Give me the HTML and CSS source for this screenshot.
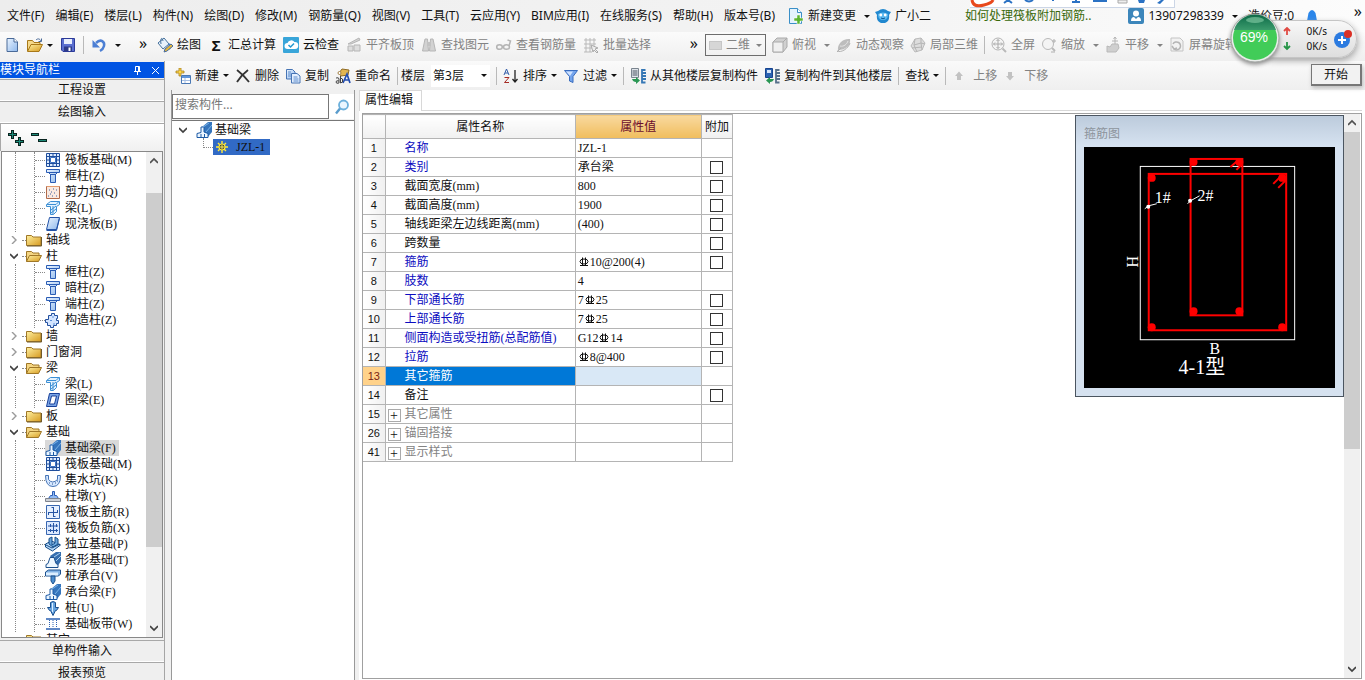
FILE: index.html
```html
<!DOCTYPE html>
<html lang="zh-CN">
<head>
<meta charset="utf-8">
<title>属性编辑</title>
<link rel="stylesheet" href="styles.css">
</head>
<body>
<svg class="defs" aria-hidden="true">
  <defs>
    <linearGradient id="gold" x1="0" y1="0" x2="1" y2="1"><stop offset="0" stop-color="#fff0a0"/><stop offset="1" stop-color="#d69a20"/></linearGradient>
    <linearGradient id="blue" x1="0" y1="0" x2="1" y2="1"><stop offset="0" stop-color="#eaf4ff"/><stop offset="1" stop-color="#8fb8ec"/></linearGradient>
    <linearGradient id="ball" x1="0" y1="0" x2="0" y2="1"><stop offset="0" stop-color="#0d6a48"/><stop offset="1" stop-color="#3b9b6c"/></linearGradient>
  </defs>
  <symbol id="new" viewBox="0 0 16 16"><path d="M3 1.500h7l3.500 3.500v9.500H3z" fill="url(#blue)" stroke="#4a6a98"/><path d="M10 1.500v3.500h3.500" fill="#fff" stroke="#4a6a98"/></symbol>
  <symbol id="open" viewBox="0 0 16 16"><path d="M.5 14V3.500h5l1.500 2h6V8" fill="#f5d98a" stroke="#a87818"/><path d="M.5 14.500 4 7.500h11.500L12 14.500z" fill="url(#gold)" stroke="#a87818"/><path d="M9 3c2-2 4-1 5 1M14.500 1.500V4.500h-3" fill="none" stroke="#4a6a98"/></symbol>
  <symbol id="save" viewBox="0 0 16 16"><path d="M1.500 1.500h13v13H3l-1.500-1.500z" fill="#5a6fd0" stroke="#2c3a98"/><path d="M4 2h8v5H4z" fill="#e8eefc"/><path d="M4 9.500h8V14H4z" fill="#2d3a88"/><path d="M8.500 10.500h2V14h-2z" fill="#fff"/></symbol>
  <symbol id="undo" viewBox="0 0 16 16"><path d="M5 6c5-5 9-1 8 3-.5 2-2 4-4 5" fill="none" stroke="#4c7fd4" stroke-width="2.500"/><path d="M1.500 3v7.500H9z" fill="#4c7fd4"/></symbol>
  <symbol id="paint" viewBox="0 0 16 16"><path d="m1 6 6-5 5 6-6 5z" fill="#e8f2fb" stroke="#44709c"/><path d="M4 7C3 2 5-1 6 4" fill="none" stroke="#44709c"/><path d="M12 7c2 2 1 4 0 5" stroke="#3e83d6" stroke-width="2" fill="none"/><path d="m7 15 1-3 6-5 2 2-6 5z" fill="#e5b73a" stroke="#4a6c9c"/></symbol>
  <symbol id="cloud" viewBox="0 0 16 16"><rect width="16" height="16" rx="1" fill="#38a5d9"/><path d="M4.500 12a3 3 0 0 1 0-6 4 4 0 0 1 7-1 3.500 3.500 0 0 1 .5 7z" fill="#fff"/><path d="m5.500 8 2 2 3.500-3.500" fill="none" stroke="#2599cf" stroke-width="1.500"/></symbol>
  <symbol id="slab" viewBox="0 0 16 16"><path d="M2 9h5v5H2zM8 8h6v6H8z" fill="#ddd" stroke="#b5b5b5"/><path d="M2 7 13 1l1 2L5 7z" fill="#d4d4d4" stroke="#b5b5b5"/></symbol>
  <symbol id="binoc" viewBox="0 0 16 16"><path d="M4 2h2.500l1 12h-6zM9.500 2H12l2.500 12h-6z" fill="#d2d2d2" stroke="#b6b6b6"/><path d="M6 5h4v4H6z" fill="#c2c2c2"/></symbol>
  <symbol id="glasses" viewBox="0 0 16 16"><g fill="none" stroke="#b4b4b4" stroke-width="1.500"><ellipse cx="3.500" cy="10" rx="2.800" ry="2.300"/><ellipse cx="10.500" cy="10" rx="3" ry="2.300"/><path d="M6.300 9.500h1.200M13 9l1.500-5-3-1"/></g></symbol>
  <symbol id="batch" viewBox="0 0 16 16"><path d="M1 3h12M1 7h12M1 11h8M3 1v14M7 1v14M11 1v8M1 15h8" stroke="#b9b9b9" fill="none"/><path d="m8 8 7 3-3 1 3 3-1 1-3-3-1 2z" fill="#eee" stroke="#aaa"/></symbol>
  <symbol id="cube" viewBox="0 0 16 16"><path d="m1 5 4-4h10v9l-4 5H1z" fill="#d0d0d0" stroke="#aaa"/><path d="M1 5h10v10H1z" fill="#f0f0f0" stroke="#aaa"/><path d="m11 5 4-4" stroke="#aaa"/></symbol>
  <symbol id="orbit" viewBox="0 0 16 16"><path d="M2 13C1 7 7 1 14 2c1 6-4 11-12 11z" fill="#bdbdbd"/><path d="M4 9c4 1 7-2 8-5" stroke="#e4e4e4" fill="none"/><path d="M1 15 5 11M1 14c4 2 11-2 13-8" fill="none" stroke="#b0b0b0"/></symbol>
  <symbol id="local" viewBox="0 0 16 16"><path d="m1 9 4-7 6-1 4 5-3 7-7 2z" fill="#ddd" stroke="#bbb"/><path d="M5 2 4 8l3 7M4 8l7-2 4 1M11 1v5l1 7M2 11l10-1" stroke="#b5b5b5" fill="none"/></symbol>
  <symbol id="full" viewBox="0 0 16 16"><circle cx="7" cy="7" r="6" fill="#f4f4f4" stroke="#b4b4b4"/><path d="M7 2.500v9M2.500 7h9M5.500 4 7 2.500 8.500 4M5.500 10 7 11.500 8.500 10M4 5.500 2.500 7 4 8.500M10 5.500 11.500 7 10 8.500" fill="none" stroke="#aaa"/><path d="m11.500 11.500 3.500 3.500" stroke="#b9b9b9" stroke-width="2"/></symbol>
  <symbol id="zoom" viewBox="0 0 16 16"><circle cx="7" cy="7" r="5.500" fill="#f4f4f4" stroke="#b9b9b9"/><path d="m11 11 3 3" stroke="#b9b9b9" stroke-width="2"/><path d="M13 2v4M11 4h4M10 15h4" stroke="#b0b0b0"/></symbol>
  <symbol id="pan" viewBox="0 0 16 16"><path d="M2 15V9l3 1 2-3h6l1 4-3 4z" fill="#cfcfcf" stroke="#b9b9b9"/><path d="M10 0v7M7 4h6M8.500 2 10 0l1.500 2" stroke="#b4b4b4" fill="none"/></symbol>
  <symbol id="rotate" viewBox="0 0 16 16"><path d="M2 1h9l3 3v10H2z" fill="#f2f2f2" stroke="#c4c4c4"/><path d="M4 7a4 4 0 1 1 1 5M3 9l2 3 3-1" fill="none" stroke="#b4b4b4" stroke-width="1.500"/></symbol>
  <symbol id="add" viewBox="0 0 16 16"><path d="M4 0h2v3h3v2H6v3H4V5H1V3h3z" fill="#ffd84a" stroke="#a8801c" stroke-width=".8"/><path d="M6.500 7.500h9v8h-9z" fill="#fff" stroke="#4a78b4"/><path d="M7 8h8v2H7z" fill="#5f96dc"/><path d="M7 12.500h8M10 10v5" stroke="#a7c0e4"/></symbol>
  <symbol id="del" viewBox="0 0 16 16"><path d="M2 2c4 3 8 7 12 12M13 2C9 5 5 9 2 14" fill="none" stroke="#333" stroke-width="1.800"/></symbol>
  <symbol id="copy" viewBox="0 0 16 16"><path d="M1.500 1.500h6L10 4v7H1.500z" fill="url(#blue)" stroke="#4674b4"/><path d="M6.500 5.500h5.500l3 2.500v7H6.500z" fill="#e3efff" stroke="#4674b4"/><path d="M8.500 9h4M8.500 11h5M8.500 13h5M3 4h3M3 6h3M3 8h3" stroke="#5d8ccc"/></symbol>
  <symbol id="rename" viewBox="0 0 16 16"><path d="m4 5 3-4 7 1-1 5-7 1z" fill="#e2b550" stroke="#8f6b24"/><circle cx="4.500" cy="5" r="1.500" fill="#fff" stroke="#a58349"/><path d="M8 15 12 6l3 9M9 12h5" stroke="#234db0" stroke-width="1.700" fill="none"/><path d="M1 10q3-1 3 1v4q-3 1-3-1t3-1M5.500 8v7q3 0 2-4l-2-1" fill="none" stroke="#444"/></symbol>
  <symbol id="sort" viewBox="0 0 16 16"><path d="m1 7 2.500-6L6 7M2 5h3" stroke="#335ca8" fill="none"/><path d="M1.500 9.500H6l-4.500 5H6" stroke="#a52b24" fill="none"/><path d="M12 2v12M9.500 11l2.500 3 2.500-3" stroke="#222" stroke-width="1.300" fill="none"/></symbol>
  <symbol id="filter" viewBox="0 0 16 16"><path d="M1.500 2.500h13L10 8.500v6L6.500 13V8.500z" fill="#75a5ed" stroke="#396cbe"/><path d="M3 3.500h7L7 8z" fill="#cfe2ff"/></symbol>
  <symbol id="from" viewBox="0 0 16 16"><path d="M1.500.500h7v9h-7z" fill="#dfe4ea" stroke="#7a848e"/><path d="M2.500 3h5M2.500 5h5M2.500 7h5" stroke="#4a5560"/><path d="M15.500 2H12v12.500h3.500M12 5h4M12 8h4M12 11h4" fill="none" stroke="#3577b5" stroke-width="1.800"/><path d="M2 11h4V9l4 3.500L6 16v-2q-3 0-4-3z" fill="#299653"/></symbol>
  <symbol id="to" viewBox="0 0 16 16"><path d="M1.500.500h7v9h-7z" fill="#2b62b1" stroke="#17438f"/><path d="M3 2h4v3H3z" fill="#d8e6fa"/><path d="M15.500 2H12v12.500h3.500M12 5h4M12 8h4M12 11h4" fill="none" stroke="#58708b" stroke-width="1.800"/><path d="M10 11H6V9l-4 3.500L6 16v-2q3 0 4-3z" fill="#299653"/></symbol>
  <symbol id="up" viewBox="0 0 10 10"><path d="m5 .500 4 4.500H7v4H3V5H1z" fill="#c2c2c2"/></symbol>
  <symbol id="down" viewBox="0 0 10 10"><path d="m5 9.500 4-4.500H7V1H3v4H1z" fill="#c2c2c2"/></symbol>
  <symbol id="change" viewBox="0 0 16 16"><path d="M1.500.500h8l4 4v11h-12z" fill="#e4f3fd" stroke="#3a8fc7"/><path d="M9.500.500v4h4" fill="#fff" stroke="#3a8fc7"/><path d="M9 7h3v3h3v3h-3v3H9v-3H6v-3h3z" fill="#5cb531" stroke="#fff" stroke-width=".5"/></symbol>
  <symbol id="robot" viewBox="0 0 16 16"><path d="M3 3q5-4 10 0l3 1-2 3q1 6-4 8H6q-5-2-4-8L0 4z" fill="#2188cf"/><path d="M3 6q5-3 10 0 0 6-5 6T3 6z" fill="#5cb9f0"/><circle cx="5.800" cy="7" r="1.400" fill="#fff"/><circle cx="10.200" cy="7" r="1.400" fill="#fff"/><path d="M6 10q2 1.500 4 0" stroke="#0b5794" fill="none"/></symbol>
  <symbol id="user" viewBox="0 0 16 16"><rect width="16" height="16" rx="2" fill="#3c86bb"/><circle cx="8" cy="5.500" r="3" fill="#fff"/><path d="M3 13q0-4 3-4l2 2 2-2q3 0 3 4z" fill="#fff"/></symbol>
  <symbol id="bell" viewBox="0 0 16 16"><path d="M3 13 4.500 5q3.500-6 7 0L13 13q3 1 2 3H1q-1-2 2-3z" fill="#2a86ea"/></symbol>
  <symbol id="search" viewBox="0 0 16 16"><circle cx="9.500" cy="6" r="4.500" fill="#eaf6ff" stroke="#6cb0dc" stroke-width="1.800"/><path d="m6 9.500-4 5" stroke="#5a9ccc" stroke-width="2.400"/></symbol>
  <symbol id="folder" viewBox="0 0 16 14"><path d="M.5 12.500v-10h5l1.500 1.500h8v8.500z" fill="url(#gold)" stroke="#9f7727"/><path d="M1 13h14.500V4" stroke="#705a2b" fill="none"/></symbol>
  <symbol id="folder-open" viewBox="0 0 16 14"><path d="M.5 12.500v-10h5l1.500 1.500h6v2.500" fill="#f4d582" stroke="#9f7727"/><path d="m.5 12.500 3-6h12l-3 6z" fill="url(#gold)" stroke="#9f7727"/></symbol>
  <symbol id="chev-r" viewBox="0 0 8 8"><path d="m2 0 4 4-4 4" stroke="#9a9a9a" stroke-width="1.400" fill="none"/></symbol>
  <symbol id="chev-d" viewBox="0 0 8 8"><path d="m0 2 4 4 4-4" stroke="#404040" stroke-width="1.700" fill="none"/></symbol>
  <symbol id="chev-u" viewBox="0 0 8 8"><path d="m0 6 4-4 4 4" stroke="#505050" stroke-width="1.700" fill="none"/></symbol>
  <symbol id="raft" viewBox="0 0 16 16"><path d="M1.500 1.500h13v13h-13z" fill="#dcebff" stroke="#1f4e9c"/><path d="M4.500 1v14M11.500 1v14M1 4.500h14M1 11.500h14M1 8h3M12 8h3M8 1v3M8 12v3" stroke="#1f4e9c"/><path d="M5.500 5.500h5v5h-5z" fill="#fff" stroke="#3a70c0"/></symbol>
  <symbol id="column" viewBox="0 0 16 16"><path d="M1.500 1.500h13v3h-2l-2 2v8h-5v-8l-2-2h-2z" fill="url(#blue)" stroke="#2a5cb4"/><path d="M2 4.500h12M5 6.500h6" stroke="#2a5cb4"/></symbol>
  <symbol id="wall" viewBox="0 0 16 16"><path d="M1.500 2.500h13v12h-13z" fill="#fae9df" stroke="#b06a4a"/><path d="M3 12h1M5 10h1M7 12h1M9 9h1M11 12h1M4 6h1M8 5h1M11 6h1M6 8h1" stroke="#3f61a0"/><path d="M2 2.500h12" stroke="#e39a6c"/></symbol>
  <symbol id="beam" viewBox="0 0 16 16"><path d="m1.500 4.500 4-3h9v3l-3 2v5l-3 3h-3v-8h-4z" fill="#e4f3ff" stroke="#3c8fd4"/><path d="M2 4.500h9l3-3M8 6v8M6 10l5-4M6 13l5-4" stroke="#3c8fd4" fill="none"/></symbol>
  <symbol id="plate" viewBox="0 0 16 16"><path d="m4.500 1.500h10l-3 12h-10z" fill="url(#blue)" stroke="#2454a8"/><path d="m1.500 14.500h10l3-12" fill="none" stroke="#2454a8"/></symbol>
  <symbol id="ring" viewBox="0 0 16 16"><path d="m4.500 1.500h10l-3 13h-10z" fill="#7aa5e6" stroke="#173f98"/><path d="m6.500 4h5l-2 8h-5z" fill="#fff" stroke="#173f98"/></symbol>
  <symbol id="gear-col" viewBox="0 0 16 16"><path d="M3.500 3.500h3v-2h3v2h3v3h-1v2h2v3h-2v2h-3v2h-3v-2h-3v-3h-2v-3h3z" fill="#d4e5ff" stroke="#24509f"/><path d="M8 4v2M5 8.500h2M9 11v2" stroke="#5e91db"/></symbol>
  <symbol id="fbeam" viewBox="0 0 16 16"><path d="m6 5 6-5h4v10l-5 6H6z" fill="#3575bd"/><path d="M1 15.500v-4l4-1V5h3v5l4 1.500v4z" fill="#eaf5ff" stroke="#1d5aa5"/><path d="m7 5 6-4M10 10l6-7" stroke="#79b2e6"/><path d="M5 12v4M8.500 12v4" stroke="#1d5aa5"/></symbol>
  <symbol id="pit" viewBox="0 0 16 16"><path d="M.5 3.500h3v4q4 5 9 0v-4h3q0 11-7.500 11T.500 3.500z" fill="#d7e8ff" stroke="#4272b5"/><path d="M4 11h1M7 12h1M10 11h1M12 9h1" stroke="#285797"/></symbol>
  <symbol id="pier" viewBox="0 0 16 16"><path d="M5.500 7.500h2v-4h2v4h2l2 3h-10z" fill="#8fb9f3" stroke="#2a5cb4"/><path d="M.5 10.500h15v3H.500z" fill="#cdd1d8" stroke="#7e848e"/></symbol>
  <symbol id="mainbar" viewBox="0 0 16 16"><path d="M1.500 1.500h13v13h-13z" fill="#e6f0ff" stroke="#3967b0"/><path d="M8.500 3v10M3 8.500h10M6.500 3.500h2M8.500 12.500h2M3.500 8v3M12.500 6v3" stroke="#2755a4"/></symbol>
  <symbol id="negbar" viewBox="0 0 16 16"><path d="M1.500 1.500h13v13h-13z" fill="#dbe9ff" stroke="#3967b0"/><path d="M8.500 3v10M3 6h10M3 10.500h10M5.500 4v3M11.500 4v3M5.500 9v3M11.500 9v3" stroke="#2755a4"/></symbol>
  <symbol id="iso" viewBox="0 0 16 16"><path d="m.500 8 6-3 9 4-8 6-7-4z" fill="#b9daf9" stroke="#164d88"/><path d="M4 2.500 7 1v8l3-2V1l3 2v5l-5 3-4-3z" fill="#6ca8dd" stroke="#164d88"/><path d="M1 9l6 3 8-4" stroke="#164d88" fill="none"/></symbol>
  <symbol id="strip" viewBox="0 0 16 16"><path d="M5 4 11 0h5v9l-4 6z" fill="#356eae"/><path d="M1 15.500v-3l2-1 2-6h4l2 6 2 1v3z" fill="#eff8ff" stroke="#1c508d"/><path d="m9 5 6-4M11 9l5-5" stroke="#a9cff0"/></symbol>
  <symbol id="cap" viewBox="0 0 16 16"><path d="m.500 4 3-2h12v4l-2 2h-13z" fill="#83b3e5" stroke="#1c508d"/><path d="M1 4.500h12v3H1z" fill="#dceeff"/><path d="M6 8h4v5l-2 3-2-3z" fill="#4b8dce" stroke="#1c508d"/></symbol>
  <symbol id="pile" viewBox="0 0 16 16"><path d="M5.500 2.500q2.500-2 5 0v5h3l-2 3h-1L8 15.500 5.500 10.500h-1l-2-3h3z" fill="#67a4df" stroke="#184d8c"/><path d="M7.500 3v9" stroke="#dceeff"/></symbol>
  <symbol id="band" viewBox="0 0 16 16"><path d="M1 3h14M1 13h14" stroke="#2c62b2" stroke-width="1.600"/><path d="M4.500 4v8M11.500 4v8M8 4v8" stroke="#2c62b2" stroke-dasharray="1 1"/></symbol>
  <symbol id="sun" viewBox="0 0 12 12"><path d="M6 0v12M0 6h12M2 2l8 8M10 2l-8 8" stroke="#ffe93a" stroke-width="1.400"/><circle cx="6" cy="6" r="3" fill="#3b3b20" stroke="#ffe93a" stroke-width="1.200"/><path d="M6 4v4M4 6h4" stroke="#fff26a"/></symbol>
  <symbol id="rebar" viewBox="0 0 12 12"><ellipse cx="6" cy="5.500" rx="4" ry="2.500" fill="none" stroke="#111"/><path d="M4.500 1.500v8M7.500 1.500v8M2 9.500h8" stroke="#111"/></symbol>
</svg>

<header class="menubar">
  <nav class="menus">
    <button>文件(F)</button><button>编辑(E)</button><button>楼层(L)</button><button>构件(N)</button><button>绘图(D)</button><button>修改(M)</button><button>钢筋量(Q)</button><button>视图(V)</button><button>工具(T)</button><button>云应用(Y)</button><button>BIM应用(I)</button><button>在线服务(S)</button><button>帮助(H)</button><button>版本号(B)</button>
    <div class="extras">
      <button class="tool"><svg class="icon"><use href="#change"/></svg>新建变更<i class="caret wide"></i></button>
      <button class="tool"><svg class="icon"><use href="#robot"/></svg>广小二</button>
    </div>
  </nav>
  <a class="tip" href="#">如何处理筏板附加钢筋..</a>
  <div class="account">
    <button class="tool"><svg class="icon"><use href="#user"/></svg>13907298339<i class="caret wide"></i></button>
    <span>造价豆:0</span>
    <button class="tool" aria-label="消息"><svg class="icon"><use href="#bell"/></svg></button>
  </div>
  <span class="more">»</span>
</header>

<div class="toolbar main-tools">
  <div class="group files">
    <button class="tool" aria-label="新建文件"><svg class="icon"><use href="#new"/></svg></button>
    <button class="tool" aria-label="打开"><svg class="icon"><use href="#open"/></svg><i class="caret"></i></button>
    <button class="tool" aria-label="保存"><svg class="icon"><use href="#save"/></svg></button>
    <i class="sep"></i>
    <button class="tool" aria-label="撤销"><svg class="icon"><use href="#undo"/></svg><i class="caret wide"></i></button>
    <span class="more">»</span>
  </div>
  <div class="group draw">
    <button class="tool"><svg class="icon"><use href="#paint"/></svg>绘图</button>
    <button class="tool"><b class="sigma">Σ</b>汇总计算</button>
    <button class="tool"><svg class="icon"><use href="#cloud"/></svg>云检查</button>
    <button class="tool off"><svg class="icon"><use href="#slab"/></svg>平齐板顶</button>
    <button class="tool off"><svg class="icon"><use href="#binoc"/></svg>查找图元</button>
    <button class="tool off"><svg class="icon"><use href="#glasses"/></svg>查看钢筋量</button>
    <button class="tool off"><svg class="icon"><use href="#batch"/></svg>批量选择</button>
    <span class="more">»</span>
  </div>
  <div class="group view">
    <label class="dimension"><i class="swatch"></i><select aria-label="视图维度"><option>二维</option></select><i class="caret"></i></label>
    <button class="tool off"><svg class="icon"><use href="#cube"/></svg>俯视<i class="caret wide"></i></button>
    <button class="tool off"><svg class="icon"><use href="#orbit"/></svg>动态观察</button>
    <button class="tool off"><svg class="icon"><use href="#local"/></svg>局部三维</button>
    <i class="sep"></i>
    <button class="tool off"><svg class="icon"><use href="#full"/></svg>全屏</button>
    <button class="tool off"><svg class="icon"><use href="#zoom"/></svg>缩放<i class="caret wide"></i></button>
    <button class="tool off"><svg class="icon"><use href="#pan"/></svg>平移<i class="caret wide"></i></button>
    <button class="tool off"><svg class="icon"><use href="#rotate"/></svg>屏幕旋转</button>
  </div>
</div>

<div class="workspace">
  <aside class="navigator">
    <h2>模块导航栏<span class="panel-actions"><button aria-label="固定"><svg viewBox="0 0 9 9"><path d="M2.500 5V.500h4V5M5.500 1v4M1 5.500h7M4.500 6v3" fill="none" stroke="#fff"/></svg></button><button aria-label="关闭"><svg viewBox="0 0 9 9"><path d="m1 1 7 7M8 1 1 8" stroke="#fff"/></svg></button></span></h2>
    <button class="section">工程设置</button>
    <button class="section">绘图输入</button>
    <div class="tree-tools">
      <button aria-label="全部展开"><svg width="16" height="16" viewBox="0 0 16 16"><path d="M4.500 0v9M0 4.500h9M11.500 7v9M7 11.500h9" stroke="#0a2420" stroke-width="3"/><path d="M4.500 1v7M1 4.500h7M11.500 8v7M8 11.500h7" stroke="#1b8a78"/></svg></button>
      <button aria-label="全部折叠"><svg width="16" height="16" viewBox="0 0 16 16"><path d="M0 4.500h8M7 10.500h9" stroke="#0a2420" stroke-width="3"/><path d="M1 4.500h6M8 10.500h7" stroke="#1b8a78"/></svg></button>
    </div>
    <div class="tree-frame">
      <div class="tree">
        <ul class="leaves">
          <li><svg class="icon"><use href="#raft"/></svg><span>筏板基础(M)</span></li>
          <li><svg class="icon"><use href="#column"/></svg><span>框柱(Z)</span></li>
          <li><svg class="icon"><use href="#wall"/></svg><span>剪力墙(Q)</span></li>
          <li><svg class="icon"><use href="#beam"/></svg><span>梁(L)</span></li>
          <li><svg class="icon"><use href="#plate"/></svg><span>现浇板(B)</span></li>
        </ul>
        <div class="branch"><svg class="chev"><use href="#chev-r"/></svg><i class="stub"></i><svg class="icon"><use href="#folder"/></svg>轴线</div>
        <div class="branch"><svg class="chev"><use href="#chev-d"/></svg><i class="stub"></i><svg class="icon"><use href="#folder-open"/></svg>柱</div>
        <ul class="leaves">
          <li><svg class="icon"><use href="#column"/></svg><span>框柱(Z)</span></li>
          <li><svg class="icon"><use href="#column"/></svg><span>暗柱(Z)</span></li>
          <li><svg class="icon"><use href="#column"/></svg><span>端柱(Z)</span></li>
          <li><svg class="icon"><use href="#gear-col"/></svg><span>构造柱(Z)</span></li>
        </ul>
        <div class="branch"><svg class="chev"><use href="#chev-r"/></svg><i class="stub"></i><svg class="icon"><use href="#folder"/></svg>墙</div>
        <div class="branch"><svg class="chev"><use href="#chev-r"/></svg><i class="stub"></i><svg class="icon"><use href="#folder"/></svg>门窗洞</div>
        <div class="branch"><svg class="chev"><use href="#chev-d"/></svg><i class="stub"></i><svg class="icon"><use href="#folder-open"/></svg>梁</div>
        <ul class="leaves">
          <li><svg class="icon"><use href="#beam"/></svg><span>梁(L)</span></li>
          <li><svg class="icon"><use href="#ring"/></svg><span>圈梁(E)</span></li>
        </ul>
        <div class="branch"><svg class="chev"><use href="#chev-r"/></svg><i class="stub"></i><svg class="icon"><use href="#folder"/></svg>板</div>
        <div class="branch"><svg class="chev"><use href="#chev-d"/></svg><i class="stub"></i><svg class="icon"><use href="#folder-open"/></svg>基础</div>
        <ul class="leaves">
          <li class="current"><svg class="icon"><use href="#fbeam"/></svg><span>基础梁(F)</span></li>
          <li><svg class="icon"><use href="#raft"/></svg><span>筏板基础(M)</span></li>
          <li><svg class="icon"><use href="#pit"/></svg><span>集水坑(K)</span></li>
          <li><svg class="icon"><use href="#pier"/></svg><span>柱墩(Y)</span></li>
          <li><svg class="icon"><use href="#mainbar"/></svg><span>筏板主筋(R)</span></li>
          <li><svg class="icon"><use href="#negbar"/></svg><span>筏板负筋(X)</span></li>
          <li><svg class="icon"><use href="#iso"/></svg><span>独立基础(P)</span></li>
          <li><svg class="icon"><use href="#strip"/></svg><span>条形基础(T)</span></li>
          <li><svg class="icon"><use href="#cap"/></svg><span>桩承台(V)</span></li>
          <li><svg class="icon"><use href="#fbeam"/></svg><span>承台梁(F)</span></li>
          <li><svg class="icon"><use href="#pile"/></svg><span>桩(U)</span></li>
          <li><svg class="icon"><use href="#band"/></svg><span>基础板带(W)</span></li>
        </ul>
        <div class="branch"><svg class="chev"></svg><i class="stub"></i><svg class="icon"><use href="#folder"/></svg>其它</div>
      </div>
      <div class="scroll nav-scroll"><svg><use href="#chev-u"/></svg><div class="track"><i></i></div><svg><use href="#chev-d"/></svg></div>
    </div>
    <button class="section">单构件输入</button>
    <button class="section">报表预览</button>
  </aside>

  <main class="content">
    <div class="toolbar component-tools">
      <button class="tool"><svg class="icon"><use href="#add"/></svg>新建<i class="caret"></i></button>
      <button class="tool"><svg class="icon"><use href="#del"/></svg>删除</button>
      <button class="tool"><svg class="icon"><use href="#copy"/></svg>复制</button>
      <button class="tool"><svg class="icon"><use href="#rename"/></svg>重命名</button>
      <i class="sep"></i>
      <label class="floor">楼层<span><select><option>第3层</option></select><i class="caret"></i></span></label>
      <i class="sep"></i>
      <button class="tool"><svg class="icon"><use href="#sort"/></svg>排序<i class="caret"></i></button>
      <button class="tool"><svg class="icon"><use href="#filter"/></svg>过滤<i class="caret"></i></button>
      <i class="sep"></i>
      <button class="tool"><svg class="icon"><use href="#from"/></svg>从其他楼层复制构件</button>
      <button class="tool"><svg class="icon"><use href="#to"/></svg>复制构件到其他楼层</button>
      <i class="sep"></i>
      <button class="tool">查找<i class="caret"></i></button>
      <i class="sep"></i>
      <button class="tool off move"><svg class="arrow"><use href="#up"/></svg>上移</button>
      <button class="tool off move"><svg class="arrow"><use href="#down"/></svg>下移</button>
    </div>

    <div class="panes">
      <section class="components">
        <div class="search"><input type="text" placeholder="搜索构件..." aria-label="搜索构件"><button aria-label="搜索"><svg class="icon"><use href="#search"/></svg></button></div>
        <ul class="component-tree">
          <li class="root"><svg class="chev"><use href="#chev-d"/></svg><svg class="icon"><use href="#fbeam"/></svg>基础梁
            <ul><li><span><svg class="sun"><use href="#sun"/></svg>JZL-1</span></li></ul>
          </li>
        </ul>
      </section>

      <section class="editor">
        <div class="tabs"><button>属性编辑</button></div>
        <div class="sheet">
          <div class="sheet-body">
            <table>
              <colgroup><col class="c-num"><col class="c-name"><col class="c-value"><col class="c-extra"></colgroup>
              <thead><tr><th></th><th>属性名称</th><th class="hot">属性值</th><th>附加</th></tr></thead>
              <tbody>
                <tr><th>1</th><td class="key">名称</td><td>JZL-1</td><td></td></tr>
                <tr><th>2</th><td class="key">类别</td><td>承台梁</td><td><input type="checkbox" aria-label="类别附加"></td></tr>
                <tr><th>3</th><td>截面宽度(mm)</td><td>800</td><td><input type="checkbox" aria-label="截面宽度附加"></td></tr>
                <tr><th>4</th><td>截面高度(mm)</td><td>1900</td><td><input type="checkbox" aria-label="截面高度附加"></td></tr>
                <tr><th>5</th><td>轴线距梁左边线距离(mm)</td><td>(400)</td><td><input type="checkbox" aria-label="轴线距离附加"></td></tr>
                <tr><th>6</th><td>跨数量</td><td></td><td><input type="checkbox" aria-label="跨数量附加"></td></tr>
                <tr><th>7</th><td class="key">箍筋</td><td><svg class="rebar"><use href="#rebar"/></svg>10@200(4)</td><td><input type="checkbox" aria-label="箍筋附加"></td></tr>
                <tr><th>8</th><td class="key">肢数</td><td>4</td><td></td></tr>
                <tr><th>9</th><td class="key">下部通长筋</td><td>7<svg class="rebar"><use href="#rebar"/></svg>25</td><td><input type="checkbox" aria-label="下部通长筋附加"></td></tr>
                <tr><th>10</th><td class="key">上部通长筋</td><td>7<svg class="rebar"><use href="#rebar"/></svg>25</td><td><input type="checkbox" aria-label="上部通长筋附加"></td></tr>
                <tr><th>11</th><td class="key">侧面构造或受扭筋(总配筋值)</td><td>G12<svg class="rebar"><use href="#rebar"/></svg>14</td><td><input type="checkbox" aria-label="侧面筋附加"></td></tr>
                <tr><th>12</th><td class="key">拉筋</td><td><svg class="rebar"><use href="#rebar"/></svg>8@400</td><td><input type="checkbox" aria-label="拉筋附加"></td></tr>
                <tr class="active"><th>13</th><td>其它箍筋</td><td></td><td></td></tr>
                <tr><th>14</th><td>备注</td><td></td><td><input type="checkbox" aria-label="备注附加"></td></tr>
                <tr class="fold"><th>15</th><td><button aria-label="展开其它属性">+</button>其它属性</td><td></td><td></td></tr>
                <tr class="fold"><th>26</th><td><button aria-label="展开锚固搭接">+</button>锚固搭接</td><td></td><td></td></tr>
                <tr class="fold"><th>41</th><td><button aria-label="展开显示样式">+</button>显示样式</td><td></td><td></td></tr>
              </tbody>
            </table>
            <figure class="stirrup">
              <figcaption>箍筋图</figcaption>
              <svg viewBox="0 0 252 242">
                <rect width="252" height="242" fill="#000"/>
                <rect x="56.500" y="19.500" width="155" height="174" fill="none" stroke="#fff"/>
                <g fill="none" stroke="#f00" stroke-width="2"><rect x="65" y="27" width="138" height="157"/><rect x="107" y="12" width="52" height="157"/><path d="m147 20 8-7M153 23l6-6M190 37l9-9M195 41l8-8"/></g>
                <g fill="#f00"><circle cx="68" cy="31" r="4"/><circle cx="199" cy="31" r="4"/><circle cx="68" cy="181" r="4"/><circle cx="199" cy="181" r="4"/><circle cx="110" cy="15" r="4"/><circle cx="156" cy="15" r="4"/><circle cx="110" cy="165" r="4"/><circle cx="156" cy="165" r="4"/></g>
                <path d="m61 62 4-3 8-2M104 57l3-3 9-5" stroke="#fff" fill="none"/><circle cx="64.500" cy="60" r="2" fill="#fff"/><circle cx="106.500" cy="54" r="2" fill="#fff"/>
                <g class="cad"><text x="71" y="56">1#</text><text x="114" y="54">2#</text><text x="126" y="208">B</text><text transform="translate(54 121) rotate(-90)">H</text><text class="type" x="95" y="228">4-1型</text></g>
              </svg>
            </figure>
          </div>
          <div class="scroll sheet-scroll"><svg><use href="#chev-u"/></svg><div class="track"><i></i></div><svg><use href="#chev-d"/></svg></div>
        </div>
      </section>
    </div>
  </main>
</div>

<div class="ime"><svg width="206" height="8" viewBox="0 0 206 8"><path d="M2 0q1 8 12 5 8-2 9-5" fill="none" stroke="#e8491d" stroke-width="3"/><g fill="none" stroke="#2b72c4" stroke-width="2"><path d="m34 3 4-3 4 3M55 0q4 3 8 0M83 0v1M102 2h8M106 0v2M123 1h14"/></g><path d="M148 0h9v3h-9z" fill="#eee" stroke="#aaa"/><path d="M168 0h7l-1 3h-5zM187 3l4-3h3l-4 4z" fill="#2b72c4"/></svg></div>
<div class="netball">
  <svg class="ball" viewBox="0 0 50 50"><circle cx="25" cy="25" r="24" fill="#e9edea" stroke="#a6aaa7"/><circle cx="25" cy="25" r="22" fill="#41cc58"/><path d="M4 17a22 22 0 0 1 42 0z" fill="url(#ball)"/><ellipse cx="25" cy="7" rx="9" ry="3" fill="#8bd0aa" opacity=".6"/></svg>
  <span class="percent">69%</span>
  <svg class="rates" viewBox="0 0 8 24"><path d="M4 8V2M1 4l3-3 3 3" fill="none" stroke="#e04a43" stroke-width="1.800"/><path d="M4 15v6M1 19l3 3 3-3" fill="none" stroke="#269447" stroke-width="1.800"/></svg>
  <div class="speed"><span>0K/s</span><span>0K/s</span></div>
  <button aria-label="加速"><svg viewBox="0 0 20 20"><circle cx="9" cy="11" r="8" fill="#2c7be0"/><path d="M9 7v8M5 11h8" stroke="#fff" stroke-width="2"/><circle cx="15" cy="5" r="4" fill="#db3026"/></svg></button>
</div>
<button class="start">开始</button>
</body>
</html>
```
FILE: styles.css
```css
:root {
  --ui: "Noto Sans", "Noto Sans CJK SC", sans-serif;
  --song: "Liberation Serif", "Noto Sans CJK SC", serif;
  --line: #b4b4b4;
}
* { box-sizing: border-box; }
body {
  margin: 0;
  height: 100vh;
  display: flex;
  flex-direction: column;
  overflow: hidden;
  position: relative;
  background: #f0f0f0;
  color: #111;
  font: 12px/16px var(--ui);
}
button, input, select { font: inherit; color: inherit; margin: 0; }
button { padding: 0; border: 0; background: none; white-space: nowrap; }
ul { list-style: none; margin: 0; padding: 0; }
.defs { position: absolute; width: 0; height: 0; }
.icon { width: 16px; height: 16px; flex: none; }

/* Menus and toolbars */
.menubar {
  display: flex;
  align-items: center;
  flex: none;
  height: 32px;
  padding: 0 3px 0 7px;
  background: linear-gradient(90deg, #ededed, #f3f3f3 60%, #fcfcfc);
}
.menus { display: flex; align-items: center; gap: 11px; }
.extras { display: flex; gap: 5px; padding-left: 2px; }
.tool { display: flex; align-items: center; gap: 4px; }
.off { color: #838383; }
.caret {
  width: 0;
  height: 0;
  flex: none;
  border: 3px solid transparent;
  border-top-color: currentColor;
  border-bottom: 0;
}
.wide { margin-left: 4px; }
.sep { width: 1px; height: 18px; flex: none; background: #b9b9b9; }
.more { font-size: 16px; line-height: 22px; align-self: flex-start; }
.tip { margin-left: 34px; color: #38680a; text-decoration: none; white-space: nowrap; }
.account { display: flex; align-items: center; gap: 10px; margin-left: 37px; }
.menubar .more { margin-left: auto; }
.toolbar { display: flex; align-items: center; flex: none; white-space: nowrap; }
.main-tools { align-items: flex-start; height: 29px; background: linear-gradient(#fbfbfb, #efefef); }
.group { display: flex; align-items: center; gap: 7px; height: 26px; }
.files { width: 157px; padding-left: 4px; }
.files .more { margin-left: 11px; }
.draw { width: 548px; }
.draw .more { margin-left: auto; padding-right: 7px; }
.view { gap: 6px; }
.sigma { width: 16px; text-align: center; font-size: 15px; }
.dimension {
  display: flex;
  align-items: center;
  gap: 4px;
  width: 61px;
  height: 22px;
  padding: 0 3px;
  border: 1px solid #6d6d6d;
  color: #838383;
}
.swatch { width: 13px; height: 9px; flex: none; background: #d6d6d6; border: 1px solid #c6c6c6; }
select { appearance: none; border: 0; padding: 0; background: none; outline: 0; }
.dimension select { flex: 1; min-width: 0; }

/* Work area */
.workspace { display: flex; flex: 1; min-height: 0; }
.navigator { display: flex; flex-direction: column; width: 165px; flex: none; margin-bottom: -4px; border-right: 1px solid #a5a5a5; }
.navigator h2 {
  display: flex;
  justify-content: space-between;
  align-items: center;
  flex: none;
  height: 16px;
  margin: 1px 0;
  padding-right: 4px;
  background: #0054e3;
  color: #fff;
  font: 12px/16px var(--ui);
}
.panel-actions { display: flex; gap: 9px; }
.panel-actions button { display: flex; }
.panel-actions svg { width: 9px; height: 9px; }
.section {
  flex: none;
  height: 22px;
  border-top: 1px solid #a8a8a8;
  border-bottom: 1px solid #fff;
  background: #efefef;
}
.tree-tools {
  display: flex;
  align-items: center;
  gap: 7px;
  flex: none;
  height: 28px;
  padding: 0 7px;
  border: solid #a8a8a8;
  border-width: 1px 0 0 1px;
  background: linear-gradient(#fff, #f0f0f0);
}
.tree-tools button { display: flex; }
.tree-frame {
  display: flex;
  flex: 1;
  min-height: 0;
  margin: 0 1px 2px;
  border: 1px solid #888;
  background: #fff;
}
.tree { flex: 1; min-width: 0; overflow: hidden; font-family: var(--song); }
.leaves { margin-left: 13px; border-left: 1px dotted #888; }
.leaves li {
  display: flex;
  align-items: center;
  height: 16px;
  margin-left: 18px;
  border-left: 1px dotted #888;
  white-space: nowrap;
}
.leaves li::before { content: ""; width: 10px; border-top: 1px dotted #888; }
.leaves span { padding: 0 3px 0 4px; }
.current .icon, .current span { background: #d9d9d9; }
.branch { display: flex; align-items: center; height: 16px; padding-left: 8px; white-space: nowrap; }
.branch .icon { height: 14px; margin-right: 4px; }
.stub { width: 4px; margin-left: 4px; border-top: 1px dotted #888; }
.chev { width: 8px; height: 8px; flex: none; }
.scroll { display: flex; flex-direction: column; align-items: center; width: 16px; flex: none; background: #f0f0f0; }
.scroll svg { width: 8px; height: 8px; margin: 5px 0; flex: none; }
.track { flex: 1; width: 100%; }
.track i { display: block; background: #cdcdcd; }
.nav-scroll .track { padding-top: 23px; }
.nav-scroll i { height: 83%; }

.content { display: flex; flex-direction: column; flex: 1; min-width: 0; }
.component-tools { gap: 6px; height: 29px; padding-left: 10px; background: linear-gradient(#fafafa, #efefef); }
.floor { display: flex; align-items: center; gap: 6px; margin-left: -3px; }
.floor span { display: flex; align-items: center; width: 59px; height: 22px; padding: 0 3px 0 2px; background: #fff; }
.floor select { flex: 1; min-width: 0; }
.arrow { width: 10px; height: 10px; }
.move { gap: 9px; padding-left: 2px; }
.panes { display: flex; flex: 1; min-height: 0; gap: 4px; padding-left: 6px; }

.components { display: flex; flex-direction: column; width: 184px; flex: none; border: solid #999; border-width: 0 1px; padding-top: 4px; }
.search { display: flex; height: 25px; margin-bottom: 1px; background: #fff; }
.search input { flex: 1; min-width: 0; border: 1px solid #777; padding: 0 2px 4px; outline: 0; background: #fff; }
.search input::placeholder { color: #777; opacity: 1; }
.search button { display: flex; align-items: center; justify-content: center; width: 25px; }
.component-tree { flex: 1; padding: 1px 7px; border-top: 1px solid #777; background: #fff; font-family: var(--song); }
.root { display: flex; flex-wrap: wrap; align-items: center; line-height: 16px; }
.root .icon { margin: 0 3px 0 9px; }
.root ul { width: 100%; padding-left: 24px; }
.root li { display: flex; align-items: center; }
.root li::before { content: ""; width: 9px; height: 9px; margin-bottom: 7px; border: dotted #888; border-width: 0 0 1px 1px; }
.root li span { display: flex; align-items: center; gap: 8px; height: 16px; padding: 0 5px 0 3px; background: #316ac5; }
.root .sun { width: 12px; height: 12px; }

.editor { display: flex; flex-direction: column; flex: 1; min-width: 0; padding-right: 3px; background: #fff; }
.tabs { display: flex; height: 21px; flex: none; border-bottom: 1px solid #d8d8d8; }
.tabs button { height: 21px; padding: 0 8px 2px 5px; border: solid #d8d8d8; border-width: 1px 1px 0; background: #fff; }
.sheet { display: flex; flex: 1; min-height: 0; margin: 2px 0 1px 3px; padding-right: 1px; border: 1px solid #a0a0a0; }
.sheet-body { flex: 1; min-width: 0; position: relative; }
table { table-layout: fixed; width: 370px; border-collapse: collapse; font-family: var(--song); line-height: 16px; }
.c-num { width: 22px; }
.c-name { width: 190px; }
.c-value { width: 126px; }
.c-extra { width: 31px; }
th, td { height: 19px; padding: 0; border: 1px solid var(--line); font-weight: normal; white-space: nowrap; }
th { background: linear-gradient(90deg, #fff, #f0f0f0); font: 11px/16px "Liberation Sans", sans-serif; }
thead th { height: 24px; background: linear-gradient(#fff, #f0f0f0); font: 12px/16px var(--ui); }
tr > :first-child { border-left: 0; }
thead .hot { background: linear-gradient(#f9d99f, #f0bd5c); color: #6b0d2c; }
td:nth-child(2) { padding-left: 19px; }
td:nth-child(3) { padding-left: 2px; }
td:nth-child(4) { text-align: center; }
.key { color: #0c0cc0; }
.active th { background: #ffd28a; color: #7b1e12; }
.active td:nth-child(2) { background: #0078d7; color: #fff; }
.active td:nth-child(3) { background: #d9e8f6; }
.fold td { color: #838383; }
.fold td:nth-child(2) { padding-left: 2px; }
.fold button { width: 13px; height: 13px; margin-right: 4px; border: 1px solid #aaa; color: #111; font-size: 14px; line-height: 10px; vertical-align: -2px; }
input[type="checkbox"] { appearance: none; display: block; width: 13px; height: 13px; margin: 0 auto; border: 1px solid #333; background: #fff; }
.rebar { width: 12px; height: 12px; vertical-align: -2px; }

.stirrup {
  position: absolute;
  top: 1px;
  right: 0;
  width: 269px;
  margin: 0;
  padding: 10px 8px 8px;
  border: 1px solid #4b5560;
  background: linear-gradient(#bccbdc, #d6e2f0 30px);
}
.stirrup figcaption { height: 21px; color: #8d949c; }
.stirrup svg { display: block; width: 100%; }
.cad { fill: #fff; font-family: var(--song); }
.cad text { font-size: 16px; }
.cad .type { font-size: 20px; }
.sheet-scroll .track i { height: 60%; }

/* Floating desktop items */
.ime { position: absolute; top: 0; left: 970px; width: 205px; height: 8px; border: solid #ccd6e6; border-width: 0 1px 1px 0; background: #fff; }
.ime svg { display: block; }
.netball {
  position: absolute;
  top: 20px;
  right: 8px;
  display: flex;
  align-items: center;
  width: 103px;
  height: 38px;
  padding: 0 3px 0 28px;
  border: 1px solid #c5c5c5;
  border-radius: 19px;
  background: linear-gradient(#f8f8f8, #dedede);
  box-shadow: 1px 3px 6px #aaa;
}
.ball { position: absolute; top: -8px; left: -25px; width: 50px; height: 50px; filter: drop-shadow(0 2px 2px #888); }
.percent { position: absolute; left: -21px; top: 8px; width: 40px; text-align: center; color: #fff; font: 14px/16px "Liberation Sans", sans-serif; }
.rates { width: 8px; height: 24px; }
.speed { display: flex; flex-direction: column; flex: 1; padding-right: 6px; text-align: right; font: 10px/15px var(--ui); }
.netball button { display: flex; }
.netball button svg { width: 20px; height: 20px; }
.start {
  position: absolute;
  top: 64px;
  right: 3px;
  width: 51px;
  height: 22px;
  border: 1px solid #777;
  border-width: 1px 2px 2px 1px;
  background: #f2f2f2;
  box-shadow: 1px 2px 4px #bbb;
}
```
